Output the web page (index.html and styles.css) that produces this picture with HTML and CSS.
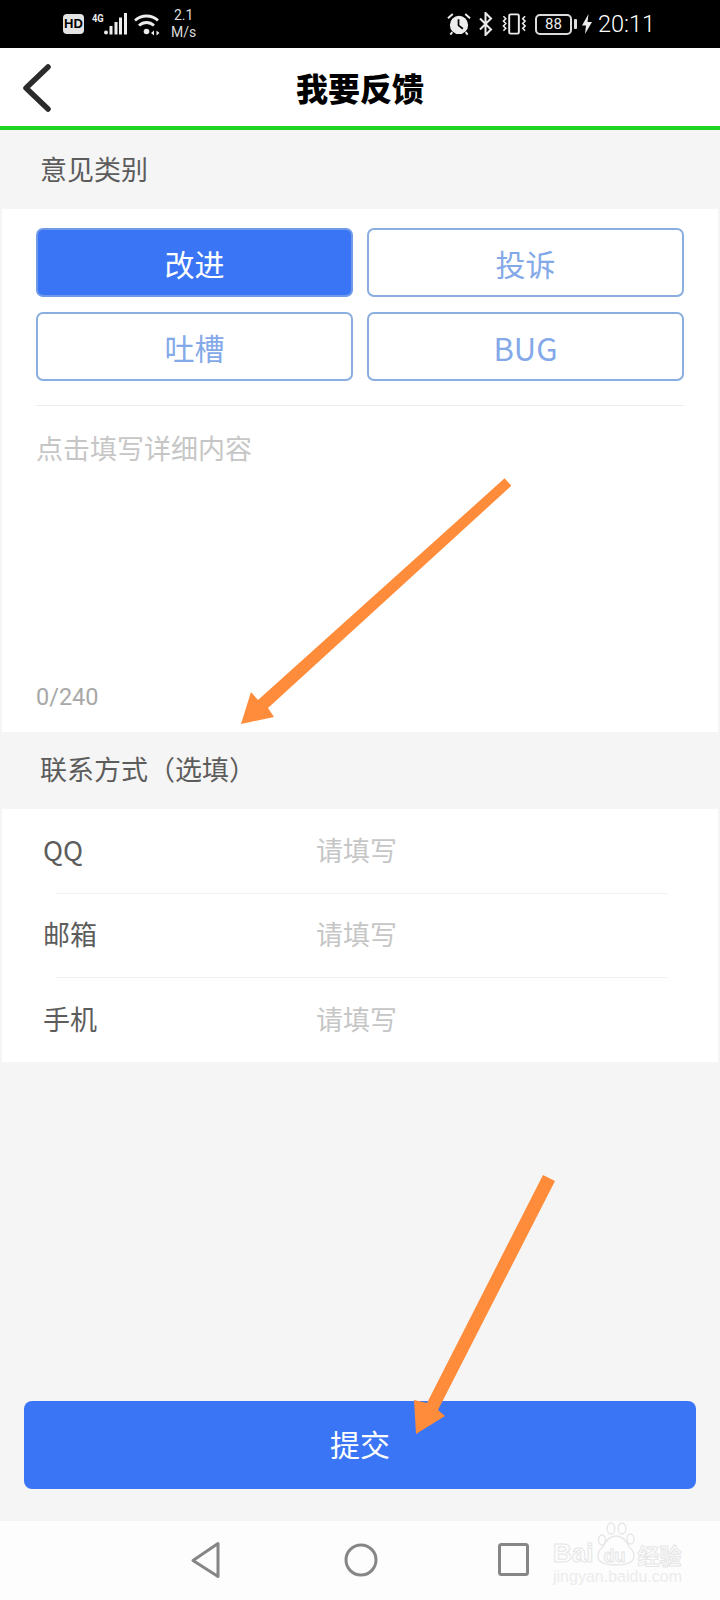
FILE: index.html
```html
<!DOCTYPE html>
<html lang="zh-CN">
<head>
<meta charset="utf-8">
<title>我要反馈</title>
<link rel="stylesheet" href="styles.css">
</head>
<body>
<div class="page">
  <div class="status">
    <div class="status-left">
      <span class="hd">HD</span>
      <span class="net">
        <span class="net-label">4G</span>
        <svg class="bars" width="23" height="23" viewBox="0 0 23 23"><g fill="#ededed"><circle cx="2" cy="20.500" r="2"/><rect x="5.500" y="14" width="3" height="8.500"/><rect x="10.500" y="10" width="3" height="12.500"/><rect x="15" y="5.500" width="3" height="17"/><rect x="20" y="1" width="3" height="21.500"/></g></svg>
      </span>
      <svg class="wifi" width="28" height="24" viewBox="0 0 28 24"><g fill="none" stroke="#ededed" stroke-width="2.800"><path d="M1 8.500C7.500 2.500 17.500 2.500 24 8.500"/><path d="M5 13.500C9.500 9.500 15.500 9.500 20 13.500"/></g><circle cx="12.500" cy="19.500" r="2.800" fill="#ededed"/><path d="M20 18.500l-3 2.500 3 2.500zM22.500 18.500l3 2.500-3 2.500z" fill="#ededed"/></svg>
      <span class="speed"><span>2.1</span><span>M/s</span></span>
    </div>
    <div class="status-right">
      <svg width="24" height="24" viewBox="0 0 25 24"><circle cx="12.500" cy="13" r="9.500" fill="#ededed"/><path d="M12 7V13.500L16.500 17" fill="none" stroke="#000" stroke-width="1.800"/><path d="M1 6L6 1.500M24 6L19 1.500M5.500 20.500L3.500 23M19.500 20.500L21.500 23" stroke="#ededed" stroke-width="2" fill="none"/></svg>
      <svg class="bt" width="15" height="24" viewBox="0 0 15 24"><path d="M2 6.500L13 17.500L7.500 23V1L13 6.500L2 17.500" fill="none" stroke="#ededed" stroke-width="2"/></svg>
      <svg class="vib" width="27" height="22" viewBox="0 0 28 22"><rect x="8.500" y="1" width="10" height="20" rx="1.500" fill="none" stroke="#ededed" stroke-width="2"/><path d="M2.500 3l2.500 2.500-2.500 2.500 2.500 2.500-2.500 2.500 2.500 2.500-2.500 2.500M25 3l-2.500 2.500 2.500 2.500-2.500 2.500 2.500 2.500-2.500 2.500 2.500 2.500" fill="none" stroke="#ededed" stroke-width="1.600"/></svg>
      <span class="battery"><span class="batt-body">88</span><span class="batt-nib"></span></span>
      <svg class="bolt" width="10" height="20" viewBox="0 0 10 20"><path d="M6.500 0L0 11.500H4L3 20L10 8H5.500z" fill="#ededed"/></svg>
      <span class="time">20:11</span>
    </div>
  </div>

  <header class="topbar">
    <svg class="back" width="34" height="50" viewBox="0 0 34 50"><path d="M27 5L5 26L27 47" fill="none" stroke="#2b2b2b" stroke-width="5.500" stroke-linecap="round" stroke-linejoin="round"/></svg>
    <h1 class="title">我要反馈</h1>
  </header>

  <div class="section-label label-first">意见类别</div>
  <section class="panel panel-feedback">
    <div class="types">
      <div class="type type-on">改进</div>
      <div class="type">投诉</div>
      <div class="type">吐槽</div>
      <div class="type type-latin">BUG</div>
    </div>
    <div class="rule"></div>
    <div class="detail">点击填写详细内容</div>
    <div class="counter">0/240</div>
  </section>

  <div class="section-label label-second">联系方式（选填）</div>
  <section class="panel panel-contact">
    <div class="row"><span class="row-name">QQ</span><span class="row-hint">请填写</span></div>
    <div class="row-rule"></div>
    <div class="row"><span class="row-name">邮箱</span><span class="row-hint">请填写</span></div>
    <div class="row-rule"></div>
    <div class="row"><span class="row-name">手机</span><span class="row-hint">请填写</span></div>
  </section>

  <div class="spacer"></div>
  <div class="submit">提交</div>

  <footer class="navbar">
    <svg width="30" height="38" viewBox="0 0 30 38"><path d="M27 2.500V35.500L2 19.500z" fill="none" stroke="#868686" stroke-width="3" stroke-linejoin="round"/></svg>
    <svg class="nav-home" width="34" height="34" viewBox="0 0 34 34"><circle cx="17" cy="17" r="15" fill="none" stroke="#868686" stroke-width="3"/></svg>
    <svg class="nav-recent" width="31" height="33" viewBox="0 0 31 33"><rect x="1.500" y="1.500" width="28" height="30" rx="2" fill="none" stroke="#868686" stroke-width="3"/></svg>
  </footer>

  <div class="watermark">
    <div class="wm-top">
      <span>Bai</span>
      <svg class="paw" width="38" height="44" viewBox="0 0 38 44"><g fill="none" stroke="#e6e6e6" stroke-width="1.300"><ellipse cx="5" cy="18" rx="3.500" ry="5"/><ellipse cx="14" cy="6.500" rx="3.800" ry="5.500"/><ellipse cx="25" cy="6.500" rx="3.800" ry="5.500"/><ellipse cx="33.500" cy="17" rx="3.500" ry="5"/><path d="M19 14C12 14 8 20 6 25C3 27 1 30 1 34C1 40 7 43 19 43C31 43 37 40 37 34C37 30 35 27 32 25C30 20 26 14 19 14Z"/></g></svg>
      <span class="wm-du">du</span>
      <span class="wm-cn">经验</span>
    </div>
    <div class="wm-url">jingyan.baidu.com</div>
  </div>

  <svg class="arrows" width="720" height="1600" viewBox="0 0 720 1600">
    <g fill="#ff8c3a">
      <path d="M504.600 478.300L511.400 485.700L268 708L274 717L241 724L251 692L258 700z"/>
      <path d="M543 1175L555 1181L438 1410L445 1416L416 1434L414 1400L427 1403z"/>
    </g>
  </svg>
</div>
</body>
</html>
```

FILE: styles.css
```css
* { box-sizing: border-box; }

html, body { margin: 0; padding: 0; }

body {
  font-family: "Noto Sans CJK SC", "Noto Sans", sans-serif;
  background: #f5f5f5;
}

.page {
  position: relative;
  width: 720px;
  height: 1600px;
  display: flex;
  flex-direction: column;
  background: #f5f5f5;
  overflow: hidden;
}

/* status bar */
.status {
  height: 48px;
  flex: none;
  background: #000;
  color: #ededed;
  display: flex;
  align-items: center;
  justify-content: space-between;
  padding: 0 65px 0 63px;
}

.status-left, .status-right { display: flex; align-items: center; }

.hd {
  width: 21px;
  height: 20px;
  border-radius: 4px;
  background: #e4e4e4;
  color: #000;
  font: 700 13px/20px "Liberation Sans", sans-serif;
  text-align: center;
}

.net { display: flex; align-items: flex-start; margin-left: 8px; height: 24px; }

.net-label {
  font: 700 11px/12px "Roboto", sans-serif;
  width: 13px;
  transform: scaleX(0.85);
  transform-origin: left top;
  margin-top: 1px;
}

.bars { margin-left: -1px; }

.wifi { margin-left: 7px; }

.speed {
  display: flex;
  flex-direction: column;
  align-items: center;
  margin-left: 9px;
  font: 400 14px/17px "Roboto", sans-serif;
  color: #dcdcdc;
}

.status-right svg { flex: none; }

.bt { margin-left: 7px; }
.vib { margin-left: 8px; }

.battery { display: flex; align-items: center; margin-left: 7px; }

.batt-body {
  width: 37px;
  height: 21px;
  border: 2px solid #dcdcdc;
  border-radius: 5px;
  font: 400 15px/17px "Roboto", sans-serif;
  text-align: center;
}

.batt-nib {
  width: 3px;
  height: 10px;
  margin-left: 2px;
  background: #dcdcdc;
  border-radius: 1px;
}

.bolt { margin-left: 5px; }

.time {
  margin-left: 6px;
  font: 300 23.500px/28px "Roboto", sans-serif;
  color: #fff;
}

/* top bar */
.topbar {
  position: relative;
  height: 82px;
  flex: none;
  background: #fff;
  border-bottom: 4px solid #1ed41e;
  display: flex;
  align-items: center;
  justify-content: center;
}

.back { position: absolute; left: 21px; top: 14px; }

.title {
  margin: 0;
  font-size: 32px;
  font-weight: 900;
  color: #000;
  line-height: 78px;
}

/* sections */
.section-label {
  flex: none;
  padding-left: 40px;
  font-size: 27px;
  color: #5c5c5c;
  display: flex;
  align-items: center;
}

.label-first { height: 79px; padding-bottom: 2px; }
.label-second { height: 77px; padding-bottom: 4px; }

.panel { flex: none; margin: 0 2px; background: #fff; }

.panel-feedback {
  height: 523px;
  padding: 19px 34px 0;
  display: flex;
  flex-direction: column;
}

.types {
  display: grid;
  grid-template-columns: 1fr 1fr;
  grid-auto-rows: 69px;
  gap: 15px 14px;
}

.type {
  border: 2px solid #8aaee0;
  border-radius: 7px;
  color: #84a9e8;
  font-size: 30px;
  padding-top: 1px;
  display: flex;
  align-items: center;
  justify-content: center;
}

.type-latin { font-size: 31px; }

.type-on {
  background: #3a75f5;
  border-color: #7099e8;
  color: #fff;
}

.rule {
  height: 1px;
  flex: none;
  margin-top: 24px;
  background: #ececec;
}

.detail {
  margin-top: 23px;
  font-size: 27px;
  line-height: 38px;
  color: #c6c6c6;
}

.counter {
  margin-top: auto;
  margin-bottom: 17px;
  font: 400 23.500px/36px "Roboto", sans-serif;
  color: #a8a8a8;
}

.panel-contact { height: 253px; padding-left: 41px; }

.row {
  height: 83.500px;
  padding-bottom: 3px;
  display: flex;
  align-items: center;
  font-size: 27px;
}

.row-name { width: 273px; color: #5c5c5c; }

.row-hint { color: #c6c6c6; }

.row-rule {
  height: 1px;
  margin: 0 51px 0 12px;
  background: #f2f2f2;
}

.spacer { flex: 1; }

.submit {
  flex: none;
  height: 88px;
  margin: 0 24px 32px;
  padding-bottom: 5px;
  border-radius: 8px;
  background: #3a75f5;
  color: #fff;
  font-size: 30px;
  display: flex;
  align-items: center;
  justify-content: center;
}

/* nav bar */
.navbar {
  height: 79px;
  flex: none;
  background: #fdfdfd;
  display: flex;
  align-items: center;
  padding: 0 0 2px 191px;
}

.nav-home { margin-left: 123px; }
.nav-recent { margin-left: 120px; }

/* overlays */
.watermark {
  position: absolute;
  left: 553px;
  top: 1522px;
  width: 130px;
  color: #e6e6e6;
  font-family: "Liberation Sans", sans-serif;
}

.wm-top {
  display: flex;
  align-items: flex-end;
  height: 45px;
  font-size: 26px;
  font-weight: 700;
  line-height: 27px;
}

.wm-top span { color: transparent; -webkit-text-stroke: 1px #e6e6e6; }

.paw { margin-left: 4px; align-self: flex-start; flex: none; }

.wm-du {
  font-size: 18px;
  line-height: 22px;
  margin-left: -32px;
  width: 32px;
}

.wm-cn {
  font-family: "Noto Sans CJK SC", sans-serif;
  font-size: 22px;
  line-height: 26px;
  margin-left: 2px;
}

.wm-url {
  margin-top: 2px;
  font-size: 16px;
  line-height: 16px;
  white-space: nowrap;
  color: #ececec;
}

.arrows { position: absolute; left: 0; top: 0; pointer-events: none; }
```
